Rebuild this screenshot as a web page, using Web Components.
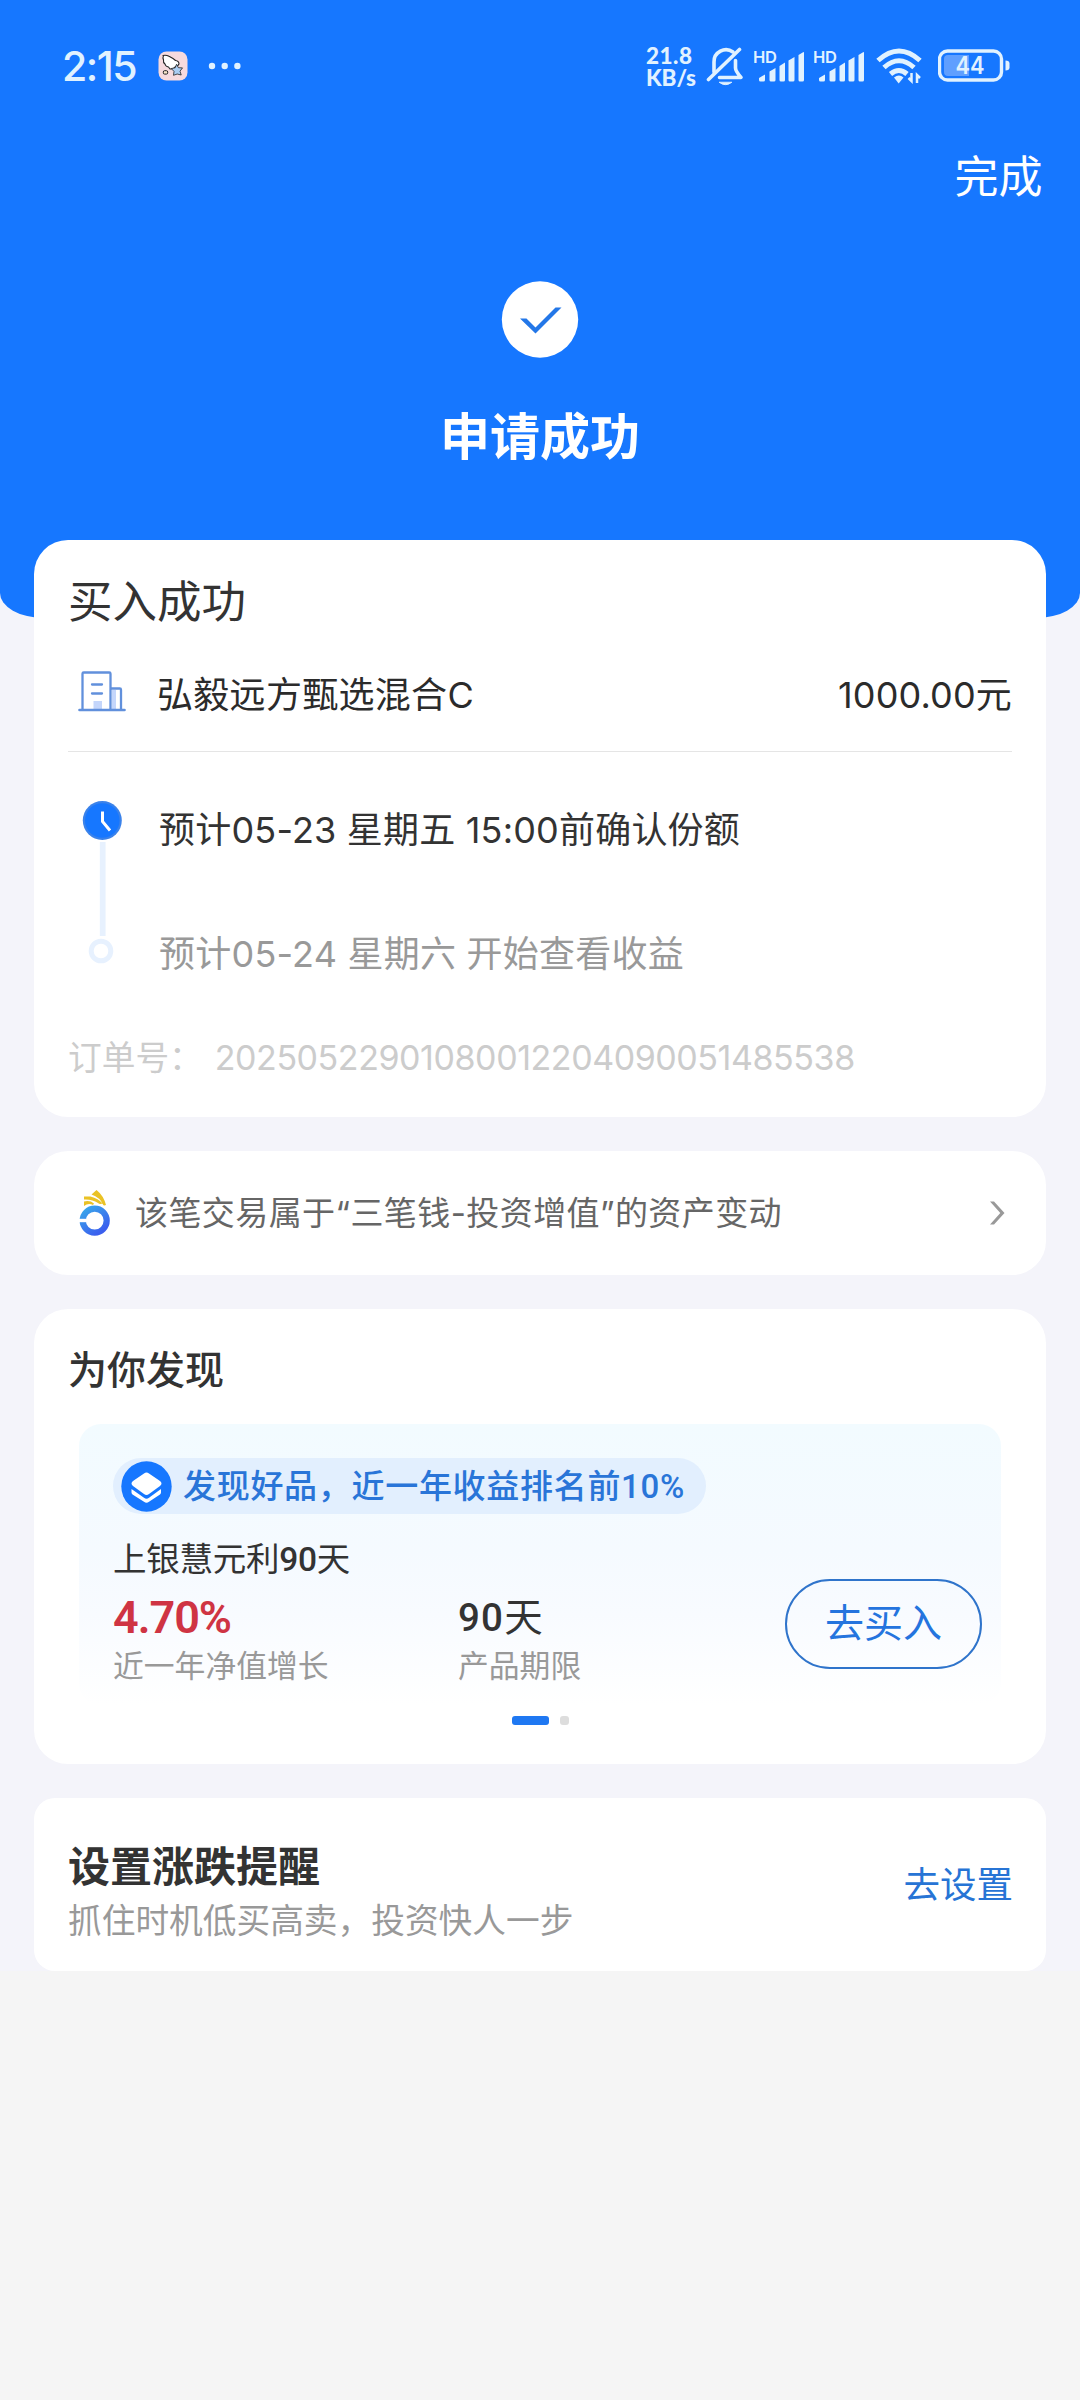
<!DOCTYPE html>
<html lang="zh-CN">
<head>
<meta charset="utf-8">
<title>申请成功</title>
<style>
html,body{margin:0;padding:0;background:#f5f5f5}
body{width:1080px;height:2400px;overflow:hidden;font-family:Inter,"Noto Sans CJK SC",sans-serif;color:#333}
</style>
</head>
<body>
<result-page></result-page>
<script>
const define=(name,html,after)=>{
  const t=document.createElement('template');
  t.innerHTML=html;
  customElements.define(name,class extends HTMLElement{
    constructor(){super();this.attachShadow({mode:'open'}).appendChild(t.content.cloneNode(true));}
    connectedCallback(){if(after)after(this);}
  });
};

/* Single-line label; "w" spreads the letters over a given advance width. */
define('fit-text',`<style>:host{display:inline-block;white-space:nowrap;line-height:1.2}</style><slot></slot>`,el=>{
  const w=parseFloat(el.getAttribute('w'));
  if(!w)return;
  const n=[...el.textContent].length;
  el.style.letterSpacing='0px';
  const natural=el.getBoundingClientRect().width;
  el.style.letterSpacing=((w-natural)/n).toFixed(3)+'px';
  el.style.width=w+'px';
});

define('signal-bars',`<style>
:host{display:block;width:50px;height:36px;color:#e1f2ff}
svg{display:block}
text{font:600 16.5px Inter,sans-serif}
</style>
<svg width="50" height="36" viewBox="0 0 50 36" fill="currentColor">
<text x="-1" y="14.5" textLength="24">HD</text>
<path d="M5 30l6-3.500v5.500a1.500 1.500 0 0 1-1.500 1.500h-3A1.500 1.500 0 0 1 5 32zM15.500 23.500l6-3.500v12a1.500 1.500 0 0 1-1.500 1.500h-3a1.500 1.500 0 0 1-1.500-1.500zM25.500 18l5.500-3.500V32a1.500 1.500 0 0 1-1.500 1.500h-2.500a1.500 1.500 0 0 1-1.500-1.500zM34.500 12.500l6-3.500v23a1.500 1.500 0 0 1-1.500 1.500h-3a1.500 1.500 0 0 1-1.500-1.500zM44.500 7l5-3q.5 0 .5.500V32a1.500 1.500 0 0 1-1.500 1.500h-2.500a1.500 1.500 0 0 1-1.500-1.500z"/>
</svg>`);

define('status-bar',`<style>
:host{display:flex;height:132px;box-sizing:border-box;padding:0 68px 0 62px;align-items:center;color:#e1f2ff;justify-content:space-between}
.l,.r{display:flex;align-items:center;height:40px}
.time{font-size:41px;font-weight:500;padding-top:1px}
.app{margin-left:22px}.dots{margin-left:20px}
.net{display:flex;flex-direction:column;align-items:flex-start;font-family:Lato,sans-serif;font-weight:900;font-size:22.500px;width:60px;height:43px;justify-content:space-between}
.net fit-text{line-height:21px}
svg{display:block;flex:none}
.bat text{font:600 24px Inter,sans-serif}
</style>
<div class="l">
<fit-text class="time" w="74">2:15</fit-text>
<svg class="app" width="30" height="30" viewBox="0 0 30 30" stroke-linejoin="round"><rect x=".5" y=".5" width="29" height="29" rx="8" fill="#f6dade"/><path d="M5 4.500q3-.8 6 .8 4 2 6.500 4.200 3.500.5 3.500 3.500-1 2.500-3.500 2.500-2 3-5.500 2.500l-1.500-2q-3-.5-3.500-3-2-1.500-1.500-4-1-2.500 0-4.500z" fill="#fff" stroke="#222" stroke-width="1.100"/><path d="M18.500 13.300l1.900 3.400 4.100.2-2.500 3.300 1.200 3.800-4-1-3.700 1.300.5-3.900-2.800-2.900 4-.7z" fill="#a9cdf3" stroke="#222" stroke-width=".8"/><rect x="5.300" y="19.700" width="4.400" height="3.400" rx="1.300" fill="#f8e6cc" stroke="#222" stroke-width="1"/></svg>
<svg class="dots" width="34" height="10" viewBox="0 0 34 10" fill="currentColor"><circle cx="4" cy="5" r="3.200"/><circle cx="16.700" cy="5" r="3.200"/><circle cx="29.400" cy="5" r="3.200"/></svg>
</div>
<div class="r">
<div class="net"><fit-text w="46.5">21.8</fit-text><fit-text w="50">KB/s</fit-text></div>
<svg width="38" height="42" viewBox="0 0 38 42" fill="none" stroke="currentColor" stroke-width="3.600" stroke-linecap="round" stroke-linejoin="round"><path d="M2.500 34.500L33.500 4.500"/><path d="M8 27V17a12 12 0 0 1 19-10"/><path d="M29.500 15.500v7.500q0 3 5.500 9.500H13.500"/><path d="M13.500 37.500q6 4.500 12 0z" fill="currentColor" stroke-width="1"/></svg>
<signal-bars style="margin-left:10px"></signal-bars>
<signal-bars style="margin-left:10px"></signal-bars>
<svg style="margin-left:12px" width="48" height="38" viewBox="0 0 48 38" fill="none" stroke="currentColor" stroke-width="5"><path d="M2 13.500Q23 -5.500 44 13.500M8 20.500Q23 7 38 20.500M14.500 27Q23 20 31 27"/><path d="M18 30.500q5-4 9.500 0l-4.800 6z" fill="currentColor" stroke="none"/><path d="M35.500 26v8l-3-3M41 36v-8l3 3" stroke-width="2.500"/></svg>
<svg class="bat" style="margin-left:14px" width="74" height="34" viewBox="0 0 74 34"><path d="M10 6h21v21H10a4 4 0 0 1-4-4V10a4 4 0 0 1 4-4z" fill="#5f9fff"/><rect x="1.500" y="2" width="62" height="29" rx="8" fill="none" stroke="currentColor" stroke-width="3.400"/><path d="M67.500 11.500q4 0 4 3v4q0 3-4 3z" fill="currentColor"/><text x="17.500" y="25.300" textLength="29" lengthAdjust="spacingAndGlyphs" fill="currentColor">44</text></svg>
</div>`);

define('result-header',`<style>
:host{display:flex;flex-direction:column;height:618px;background:#1677ff;color:#fff;border-radius:0 0 44px 44px/0 0 25px 25px}
.nav{display:flex;justify-content:flex-end;padding-right:37.500px;height:84px;align-items:center;font-size:44px}
.hero{display:flex;flex-direction:column;align-items:center;padding-top:65px}
svg{display:block}
h1{margin:0;font-size:50px;font-weight:700;height:156px;line-height:156px}
</style>
<status-bar></status-bar>
<div class="nav"><span>完成</span></div>
<div class="hero">
<svg width="78" height="78" viewBox="0 0 78 78"><circle cx="39" cy="38.500" r="38.200" fill="#fff"/><path d="M19 37.500h6.500l9 9 20-20H60.500L34.500 52.500z" fill="#2377e8"/></svg>
<h1>申请成功</h1>
</div>`);

define('white-card',`<style>:host{display:block;background:#fff;border-radius:34px;margin:0 34px}</style><slot></slot>`);

define('order-steps',`<style>
:host{display:flex;margin-top:15px}
svg{display:block;width:91px;flex:none}
.t{display:flex;flex-direction:column;font-size:36px}
.t div{height:124px;display:flex;align-items:center;box-sizing:border-box;padding-top:3px}
.t div+div{color:#999}
</style>
<svg width="91" height="248" viewBox="0 0 91 248"><circle cx="34.300" cy="53.500" r="19.500" fill="#3a82ea"/><circle cx="34.300" cy="53.500" r="17.300" fill="#1677ff"/><path d="M34.500 44.500v10l7.500 9" fill="none" stroke="#fff" stroke-width="3"/><path d="M31.800 75h5.800v94h-5.800z" fill="#e7f1fe"/><circle cx="33" cy="184" r="9.800" fill="#fff" stroke="#e7f1fe" stroke-width="5"/></svg>
<div class="t"><div><fit-text w="581">预计05-23 星期五 15:00前确认份额</fit-text></div><div><fit-text w="525">预计05-24 星期六 开始查看收益</fit-text></div></div>`);

define('order-card',`<style>
:host{display:block;padding:0 34px 16px;height:561px}
h2{margin:0;font-size:44.500px;font-weight:400;height:123px;line-height:125px}
.fund{display:flex;align-items:center;height:62px;font-size:36px;color:#2b2b2b;padding-bottom:26px;border-bottom:1px solid #e5e5e5}
.fund svg{margin:-6px 31px 0 10px;display:block}
.fund fit-text{padding-top:3px}
.fund .amt{margin-left:auto}
.no{display:flex;align-items:center;height:86px;font-size:33.700px;color:#ccc}
.no span{line-height:40px}
.no .d{margin-left:12px;font-size:34px;padding-top:1px}
</style>
<h2>买入成功</h2>
<div class="fund">
<svg width="48" height="42" viewBox="0 0 48 42" fill="none" stroke="#6190dc" stroke-width="2.300"><path d="M15.500 31h8.500v9h-8.500zM34 20h4v19h-4z" fill="#c4d6fb" stroke="none"/><path d="M4.500 39.500V3.700q0-1.200 1.200-1.200h25.600q1.200 0 1.200 1.200v36M32.500 18.500h9.300q1.200 0 1.200 1.200v20M14 14.500h10M14 23.500h10" stroke-linecap="round"/><path d="M1.500 40h45" stroke-width="2.600" stroke-linecap="round"/></svg>
<fit-text w="317">弘毅远方甄选混合C</fit-text>
<fit-text class="amt" w="174">1000.00元</fit-text>
</div>
<order-steps></order-steps>
<div class="no"><span>订单号：</span><fit-text class="d" w="640">20250522901080012204090051485538</fit-text></div>`);

define('asset-link',`<style>
:host{display:flex;align-items:center;height:124px;padding:0 38px 0 43px;font-size:33px;color:#666}
svg{display:block;flex:none}
fit-text{margin-left:22px;padding-top:2px}
.go{margin-left:auto}
</style>
<svg width="36" height="50" viewBox="0 0 36 50"><defs><linearGradient id="g" x1="0" y1="0" x2=".7" y2="1"><stop offset="0" stop-color="#39a8ea"/><stop offset="1" stop-color="#3b5fee"/></linearGradient></defs><circle cx="17.700" cy="32.600" r="12" fill="none" stroke="url(#g)" stroke-width="6.200"/><path d="M1 30.800h8.500v3.400H1z" fill="#fff"/><path d="M14.500 6.500l5-4.500q7 5.500 9.500 15-2.500 1-3-.5-3-7-11.500-10zM7 8.500h6.500q8 2 12 7-3 1-4.500-.5-6-4-14-3.500zM7 13.500q6-1.500 10 2l-1 1.500q-3-1.500-6.500-.5L7 18z" fill="#eac225"/></svg>
<fit-text w="647">该笔交易属于“三笔钱-投资增值”的资产变动</fit-text>
<svg class="go" width="18" height="26" viewBox="0 0 18 26"><path d="M0 1.500h4L14.500 13 4 24.500H0L10.300 13z" fill="#999"/></svg>`);

define('product-panel',`<style>
:host{display:block;box-sizing:border-box;height:281px;margin:0 45px;padding:34px 19px 0 34px;border-radius:22px;background:linear-gradient(#f2fbff,#f5faff 45%,#f8fbff 68%,#fff)}
.tag{display:flex;align-items:center;width:593px;height:56px;box-sizing:border-box;padding-left:8px;border-radius:28px;background:#e2effe;color:#2975d8;font-size:33px;font-weight:500}
.tag,.name,.v{font-family:Roboto,"Noto Sans CJK SC",sans-serif}
.tag fit-text{margin-left:11px;padding-top:2px}
svg{display:block}
.name{margin-top:24px;height:44px;display:flex;align-items:center;font-size:33.500px}
.name b,.v b{font-weight:500}
.row{display:flex;justify-content:space-between}
.stats{display:grid;grid-template-columns:345px auto}
.v{height:72px;display:flex;align-items:center;font-size:38.500px}
.v.red{color:#cf3443;font-size:45px}
.v.red b{font-weight:600}
.k{height:24px;line-height:24px;font-size:30.800px;color:#999}
.buy{margin-top:-3px;box-sizing:border-box;width:197px;height:90px;border:2.500px solid #2f74cb;border-radius:45px;color:#2474de;font-size:39px;line-height:84px;text-align:center}
</style>
<div class="tag"><svg width="51" height="51" viewBox="0 0 51 51"><circle cx="25.500" cy="25.500" r="25.200" fill="#1677ff"/><path d="M23 12.500q2.500-1.800 5 0l11 7.500q3 2.500 0 5l-11 8q-2.500 2-5 0l-11-8q-3-2.500 0-5z" fill="#fff"/><path d="M10.500 28v3.500q0 1.200 1 2L23 40.800q2.500 1.700 5 0l11-7.300q1-.800 1-2V28L28 36.800q-2.500 1.700-5 0z" fill="#fff"/></svg><fit-text w="502">发现好品，近一年收益排名前10%</fit-text></div>
<div class="name"><fit-text w="237">上银慧元利<b>90</b>天</fit-text></div>
<div class="row">
<div class="stats"><div class="v red"><fit-text w="118"><b>4.70%</b></fit-text></div><div class="v"><fit-text w="86"><b>90</b>天</fit-text></div><div class="k">近一年净值增长</div><div class="k">产品期限</div></div>
<div class="buy">去买入</div>
</div>`);

define('discover-card',`<style>
:host{display:block;height:448px;padding-top:7px}
h3{margin:0;padding-left:34px;height:108px;line-height:108px;font-size:39px;font-weight:500}
.pg{display:flex;justify-content:center;gap:11px;margin-top:11px}
.pg i{width:9px;height:9px;border-radius:3px;background:#ddd}
.pg i:first-child{width:37px;background:#1f78f2}
</style>
<h3>为你发现</h3><product-panel></product-panel><div class="pg"><i></i><i></i></div>`);

define('alert-card',`<style>
:host{display:flex;box-sizing:border-box;height:173px;padding:0 33px 0 34px;justify-content:space-between;align-items:center}
h3{margin:0;height:46px;line-height:46px;font-size:42px;font-weight:700}
p{margin:0;height:61px;line-height:61px;font-size:33.700px;color:#999}
.a{padding-top:25px}
.s{font-size:36.500px;line-height:44px;color:#2774d5}
</style>
<div class="a"><h3>设置涨跌提醒</h3><p>抓住时机低买高卖，投资快人一步</p></div><span class="s">去设置</span>`);

define('result-page',`<style>
:host{display:block}
.top{background:#f4f4fa;height:1971px}
main{display:flex;flex-direction:column;gap:34px;margin-top:-78px}
white-card:last-child{border-radius:21px}
</style>
<div class="top"><result-header></result-header>
<main>
<white-card><order-card></order-card></white-card>
<white-card><asset-link></asset-link></white-card>
<white-card><discover-card></discover-card></white-card>
<white-card><alert-card></alert-card></white-card>
</main></div>`);
</script>
</body>
</html>
